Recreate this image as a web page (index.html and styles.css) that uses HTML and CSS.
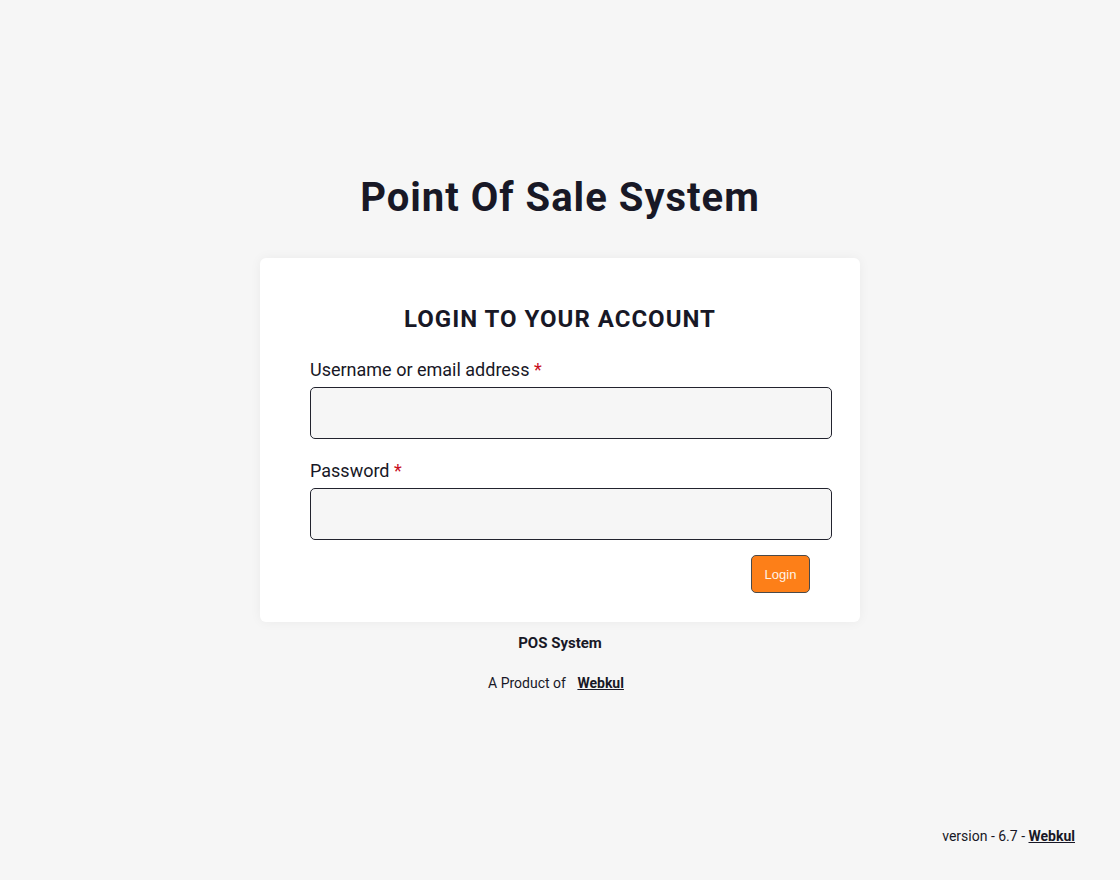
FILE: index.html
```html
<!DOCTYPE html>
<html lang="en">
<head>
<meta charset="utf-8">
<title>Point Of Sale System</title>
<link rel="stylesheet" href="styles.css">
</head>
<body>
<div class="page">
  <main class="main">
    <h1 class="title">Point Of Sale System</h1>
    <div class="card">
      <h2 class="card-title">LOGIN TO YOUR ACCOUNT</h2>
      <form class="form">
        <label class="label" for="user">Username or email address <span class="req">*</span></label>
        <input class="input" id="user" type="text">
        <label class="label label-pw" for="pw">Password <span class="req">*</span></label>
        <input class="input" id="pw" type="password">
        <div class="actions">
          <button class="btn" type="button">Login</button>
        </div>
      </form>
    </div>
    <div class="brand">POS System</div>
    <div class="product">A Product of <a class="link link-gap" href="#">Webkul</a></div>
  </main>
  <footer class="footer">version - 6.7 - <a class="link" href="#">Webkul</a></footer>
</div>
</body>
</html>
```

FILE: styles.css
```css
* { box-sizing: border-box; }
html, body { margin: 0; padding: 0; }
body {
  background: #f6f6f6;
  font-family: Roboto, "Liberation Sans", sans-serif;
  color: #181826;
}
.page {
  min-height: 100vh;
  display: flex;
  flex-direction: column;
}
.main {
  display: flex;
  flex-direction: column;
  align-items: center;
  padding-top: 174px;
}
.title {
  margin: 0;
  font-size: 40px;
  line-height: 48px;
  font-weight: 700;
  letter-spacing: 1px;
}
.card {
  margin-top: 36px;
  width: 600px;
  background: #fff;
  border-radius: 6px;
  box-shadow: 0 0 12px rgba(0,0,0,0.05);
  padding: 46px 28px 29px 50px;
}
.card-title {
  margin: 0;
  text-align: center;
  font-size: 24px;
  line-height: 30px;
  font-weight: 700;
  letter-spacing: 1px;
  transform: translateX(-11px);
}
.form {
  display: flex;
  flex-direction: column;
  margin-top: 24px;
}
.label {
  font-size: 18px;
  line-height: 24px;
  margin-bottom: 5px;
}
.label-pw { margin-top: 20px; }
.req { color: #c8101e; }
.input {
  width: 522px;
  height: 52px;
  border: 1px solid #22232e;
  border-radius: 5px;
  background: #f6f6f6;
  font-size: 16px;
  padding: 0 12px;
  outline: none;
}
.actions {
  display: flex;
  justify-content: flex-end;
  margin-top: 15px;
  padding-right: 22px;
}
.btn {
  width: 59px;
  height: 38px;
  background: #fd7f18;
  color: #fff3e6;
  border: 1px solid #4a4a4a;
  border-radius: 5px;
  font-family: "Liberation Sans", Arial, sans-serif;
  font-size: 13px;
  padding: 0;
  cursor: pointer;
}
.brand {
  margin-top: 12px;
  font-size: 15px;
  line-height: 18px;
  font-weight: 700;
}
.product {
  margin-top: 23px;
  font-size: 14px;
  line-height: 17px;
  padding-right: 8px;
}
.link {
  color: #181826;
  font-weight: 700;
  text-decoration: underline;
}
.link-gap { margin-left: 8px; }
.footer {
  margin-top: auto;
  align-self: flex-end;
  padding: 0 45px 35px 0;
  font-size: 14px;
  line-height: 17px;
}
```
